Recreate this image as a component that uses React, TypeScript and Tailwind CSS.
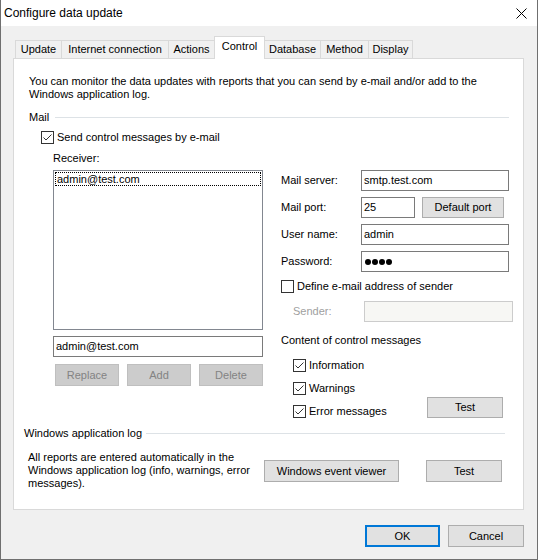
import * as React from 'react';

const font = "font-['Liberation_Sans',Arial,sans-serif]";

const Check = ({ checked, label, className = '' }: { checked: boolean; label: string; className?: string }) => (
  <div className={`flex items-center h-[13px] ${className}`}>
    <div className="w-[13px] h-[13px] border border-[#333333] bg-white shrink-0">
      {checked && (
        <svg width="11" height="11" viewBox="0 0 11 11" className="block">
          <polyline points="1.5,5.5 4,8 9.5,2.5" fill="none" stroke="#333333" strokeWidth="1" />
        </svg>
      )}
    </div>
    <span className="ml-[3px] leading-[13px] whitespace-nowrap">{label}</span>
  </div>
);

const Button = ({ label, className = '', disabled = false }: { label: string; className?: string; disabled?: boolean }) => (
  <div
    className={`flex items-center justify-center h-[22px] border shrink-0 ${
      disabled ? 'bg-[#cccccc] border-[#bfbfbf] text-[#838383]' : 'bg-[#e1e1e1] border-[#adadad] text-black'
    } ${className}`}
  >
    {label}
  </div>
);

const Field = ({ value, className = '' }: { value: string; className?: string }) => (
  <div className={`h-[21px] border border-[#7a7a7a] bg-white flex items-center pl-[2px] ${className}`}>{value}</div>
);

const tabs = [
  { name: 'Update', w: 'w-[47px]' },
  { name: 'Internet connection', w: 'w-[108px]' },
  { name: 'Actions', w: 'w-[47px]' },
  { name: 'Control', w: 'w-[51px]', active: true },
  { name: 'Database', w: 'w-[57px]' },
  { name: 'Method', w: 'w-[49px]' },
  { name: 'Display', w: 'w-[45px]' },
];

export default function App() {
  return (
    <div className={`w-[538px] h-[560px] bg-[#f0f0f0] border-x border-b border-[#6f6f6f] text-[11px] text-black ${font} flex flex-col`}>
      {/* Title bar */}
      <div className="h-[26px] bg-white flex items-center justify-between pl-[3px] pr-[10px] shrink-0">
        <span className="text-[12px]">Configure data update</span>
        <svg width="11" height="11" viewBox="0 0 11 11">
          <path d="M0.5 0.5L10.5 10.5M10.5 0.5L0.5 10.5" stroke="#000" strokeWidth="1" />
        </svg>
      </div>

      {/* Tabs */}
      <div className="ml-[14px] mt-[10px] h-[22px] flex items-end">
        {tabs.map((t) => (
          <div
            key={t.name}
            className={`${t.w} flex items-center justify-center border border-[#d9d9d9] -ml-px first:ml-0 border-b-0 ${
              t.active ? 'h-[23px] pb-[3px] bg-white relative z-10 -mb-px' : 'h-[18px] bg-[#f0f0f0]'
            }`}
          >
            {t.name}
          </div>
        ))}
      </div>

      {/* Panel */}
      <div className="ml-[12px] w-[511px] h-[452px] bg-white border border-[#d9d9d9] flex flex-col">
        <div className="pl-[15px] pt-[16px] leading-[13px] whitespace-nowrap">
          You can monitor the data updates with reports that you can send by e-mail and/or add to the
          <br />
          Windows application log.
        </div>

        <div className="mt-[10px] h-[13px] flex items-center pl-[15px] pr-[14px]">
          <span className="w-[26px] leading-[13px]">Mail</span>
          <div className="flex-1 h-px bg-[#dde2e6]" />
        </div>

        <Check checked label="Send control messages by e-mail" className="mt-[7px] ml-[27px]" />

        <div className="mt-[8px] flex">
          {/* Left column */}
          <div className="ml-[39px] w-[210px] flex flex-col">
            <span className="leading-[13px] h-[13px]">Receiver:</span>
            <div className="mt-[5px] h-[160px] border border-[#828790] bg-white p-px">
              <div className="h-[14px] border border-dotted border-black flex items-center pl-px leading-[12px]">
                admin@test.com
              </div>
            </div>
            <Field value="admin@test.com" className="mt-[6px]" />
            <div className="mt-[7px] ml-[2px] flex gap-[8px]">
              <Button label="Replace" disabled className="w-[64px]" />
              <Button label="Add" disabled className="w-[64px]" />
              <Button label="Delete" disabled className="w-[64px]" />
            </div>
          </div>

          {/* Right column */}
          <div className="ml-[18px] w-[232px] pt-[18px] flex flex-col">
            <div className="flex flex-col gap-[6px]">
              <div className="flex items-center">
                <span className="w-[80px]">Mail server:</span>
                <Field value="smtp.test.com" className="w-[148px]" />
              </div>
              <div className="flex items-center">
                <span className="w-[80px]">Mail port:</span>
                <Field value="25" className="w-[54px]" />
                <Button label="Default port" className="ml-[7px] w-[82px] !h-[21px]" />
              </div>
              <div className="flex items-center">
                <span className="w-[80px]">User name:</span>
                <Field value="admin" className="w-[148px]" />
              </div>
              <div className="flex items-center">
                <span className="w-[80px]">Password:</span>
                <div className="w-[148px] h-[21px] border border-[#7a7a7a] bg-white flex items-center pl-[3px] gap-[1px]">
                  {[0, 1, 2, 3].map((i) => (
                    <span key={i} className="w-[6px] h-[6px] rounded-full bg-black" />
                  ))}
                </div>
              </div>
            </div>

            <Check checked={false} label="Define e-mail address of sender" className="mt-[8px]" />

            <div className="mt-[8px] flex items-center">
              <span className="ml-[12px] w-[71px] text-[#a0a0a0]">Sender:</span>
              <div className="w-[149px] h-[21px] border border-[#cccccc] bg-[#f7f7f4]" />
            </div>

            <span className="mt-[12px] leading-[13px]">Content of control messages</span>

            <div className="mt-[12px] ml-[12px] flex flex-col gap-[10px]">
              <Check checked label="Information" />
              <Check checked label="Warnings" />
              <div className="h-[13px] flex items-end">
                <Check checked label="Error messages" />
                <div className="flex-1" />
                <Button label="Test" className="w-[76px] !h-[21px] mr-[10px]" />
              </div>
            </div>
          </div>
        </div>

        <div className="mt-[9px] h-[13px] flex items-center pl-[10px] pr-[18px]">
          <span className="w-[122px] leading-[13px]">Windows application log</span>
          <div className="flex-1 h-px bg-[#dde2e6]" />
        </div>

        <div className="mt-[11px] flex items-start">
          <div className="ml-[14px] w-[236px] leading-[13px]">
            All reports are entered automatically in the
            <br />
            Windows application log (info, warnings, error
            <br />
            messages).
          </div>
          <Button label="Windows event viewer" className="mt-[9px] w-[135px]" />
          <Button label="Test" className="mt-[9px] ml-[27px] w-[76px]" />
        </div>
      </div>

      {/* Dialog buttons */}
      <div className="mt-[15px] flex justify-end gap-[8px] pr-[13px]">
        <div className="w-[75px] h-[22px] flex items-center justify-center bg-[#e1e1e1] border-2 border-[#0078d7]">OK</div>
        <Button label="Cancel" className="w-[76px]" />
      </div>
    </div>
  );
}
